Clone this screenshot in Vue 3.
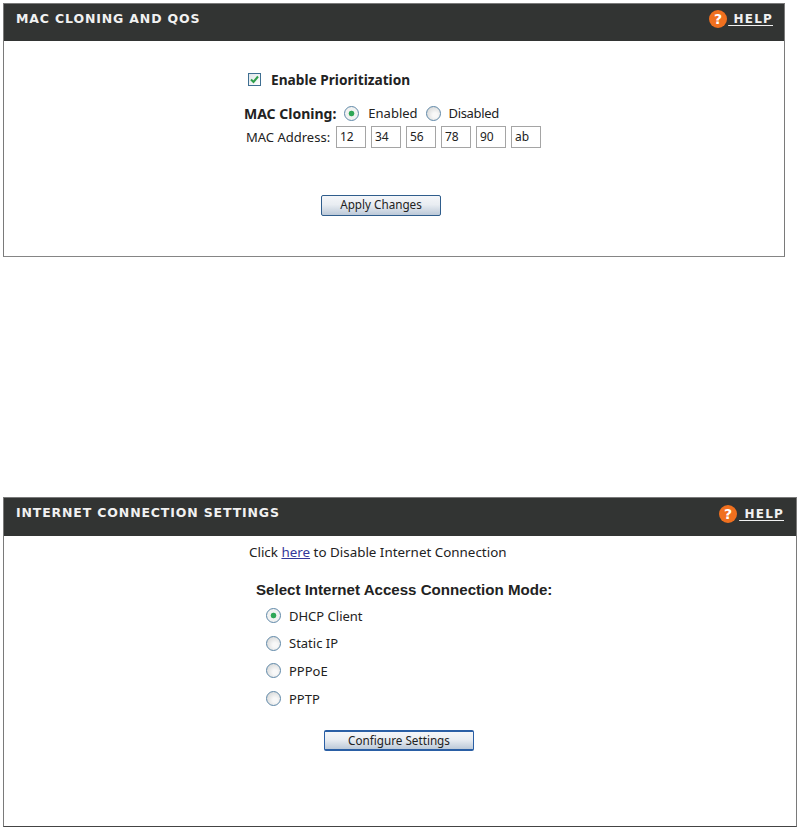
<script setup>
const macParts = ['12', '34', '56', '78', '90', 'ab']
const modes = [
  { label: 'DHCP Client', on: true },
  { label: 'Static IP', on: false },
  { label: 'PPPoE', on: false },
  { label: 'PPTP', on: false },
]
</script>

<template>
  <div class="page">
    <section class="panel panel-mac">
      <header class="bar">
        <h2>MAC CLONING AND QOS</h2>
        <a class="help">
          <span class="qmark">?</span><span class="help-text"> HELP</span>
        </a>
      </header>
      <div class="mac-body">
        <div class="prio">
          <span class="check">
            <svg width="11" height="11" viewBox="0 0 11 11"><path d="M2 5.5 L4.5 8 L9 2.5" fill="none" stroke="#2e9e4a" stroke-width="2"/></svg>
          </span>
          <b>Enable Prioritization</b>
        </div>
        <div class="clone">
          <b>MAC Cloning:</b>
          <span class="radio on"></span><span class="opt-a">Enabled</span>
          <span class="radio"></span><span class="opt-b">Disabled</span>
        </div>
        <div class="addr">
          <span class="addr-label">MAC Address:</span>
          <span v-for="p in macParts" :key="p" class="field">{{ p }}</span>
        </div>
        <button class="btn btn-apply">Apply Changes</button>
      </div>
    </section>

    <section class="panel panel-net">
      <header class="bar">
        <h2>INTERNET CONNECTION SETTINGS</h2>
        <a class="help">
          <span class="qmark">?</span><span class="help-text"> HELP</span>
        </a>
      </header>
      <div class="net-body">
        <p class="click">Click <a class="link">here</a> to Disable Internet Connection</p>
        <h3>Select Internet Access Connection Mode:</h3>
        <ul class="modes">
          <li v-for="m in modes" :key="m.label">
            <span class="radio" :class="{ on: m.on }"></span>{{ m.label }}
          </li>
        </ul>
        <button class="btn btn-config">Configure Settings</button>
      </div>
    </section>
  </div>
</template>

<style scoped>
.page {
  width: 800px;
  height: 833px;
  box-sizing: border-box;
  padding-top: 3px;
  padding-left: 3px;
  background: #fff;
  font-family: "Noto Sans", "DejaVu Sans", sans-serif;
  font-size: 13px;
  color: #222;
  overflow: hidden;
}
.panel {
  box-sizing: border-box;
  border: 1px solid #7a7a7a;
  background: #fff;
}
.panel-mac { width: 782px; height: 254px; border-bottom-color: #858585; }
.panel-net { width: 794px; height: 330px; margin-top: 240px; border-bottom-color: #444; }
.bar {
  height: 37px;
  background: #323433;
  display: flex;
  align-items: flex-start;
  justify-content: space-between;
  color: #f1f1f1;
}
.panel-net .bar { height: 38px; }
.bar h2 {
  margin: 7px 0 0 12px;
  font-family: "DejaVu Sans", sans-serif;
  font-size: 12.5px;
  line-height: 16px;
  font-weight: 700;
  letter-spacing: 0.85px;
}
.help {
  display: flex;
  align-items: center;
  margin: 6px 11px 0 0;
  font-family: "DejaVu Sans", sans-serif;
  font-weight: 700;
  font-size: 12px;
  letter-spacing: 1.2px;
  line-height: 16px;
}
.panel-net .help { margin-right: 12px; margin-top: 7px; }
.panel-net .qmark { margin-right: 2px; }
.qmark {
  width: 18px;
  height: 18px;
  margin-right: 1px;
  border-radius: 50%;
  background: #f0701f;
  color: #fff;
  text-align: center;
  font-size: 14px;
  line-height: 18px;
  letter-spacing: 0;
}
.help-text {
  white-space: pre;
  text-decoration: underline;
  text-underline-offset: 2px;
}
.mac-body {
  display: flex;
  flex-direction: column;
  align-items: flex-start;
}
.prio {
  display: flex;
  align-items: center;
  margin: 28px 0 0 244px;
  height: 20px;
  font-size: 13.7px;
}
.check {
  width: 13px;
  height: 13px;
  box-sizing: border-box;
  border: 1px solid #3f6f92;
  background: linear-gradient(135deg, #dfe5e8, #fff);
  margin-right: 10px;
  display: flex;
  align-items: center;
  justify-content: center;
}
.clone {
  display: flex;
  align-items: center;
  margin: 15px 0 0 240px;
  height: 18px;
}
.clone b { font-size: 14px; margin-right: 8px; }
.clone .radio { margin-right: 9px; }
.opt-a { margin-right: 8px; }
.opt-b { letter-spacing: -0.35px; margin-left: -1px; }
.radio {
  display: inline-block;
  flex: none;
  width: 15px;
  height: 15px;
  box-sizing: border-box;
  border-radius: 50%;
  border: 1.5px solid #5f88a8;
  background: radial-gradient(circle at 62% 62%, #f8f8f8 20%, #d2d4d4 90%);
  margin-right: 8px;
}
.radio.on {
  background: radial-gradient(circle, #2fa756 0 2.5px, #f1f2f1 3.2px);
}
.addr {
  display: flex;
  align-items: center;
  margin: 4px 0 0 242px;
  height: 22px;
}
.addr-label { width: 90px; flex: none; }
.field {
  box-sizing: border-box;
  width: 30px;
  height: 22px;
  margin-right: 5px;
  border: 1px solid #a5a5a5;
  padding-left: 3px;
  font-size: 12px;
  line-height: 20px;
}
.btn {
  display: block;
  box-sizing: border-box;
  border: 1px solid #2f5d8c;
  border-radius: 2px;
  background: linear-gradient(#f4f6f9 0%, #e9edf2 45%, #bcc9d8 100%);
  font-family: inherit;
  font-size: 11.7px;
  line-height: 17px;
  color: #222;
  padding: 0 0 2px;
}
.btn-apply {
  width: 120px;
  height: 21px;
  margin: 47px 0 0 317px;
}
.net-body {
  display: flex;
  flex-direction: column;
  align-items: flex-start;
}
.click {
  margin: 7px 0 0 245px;
  line-height: 18px;
  font-size: 13.4px;
}
.link { color: #33379a; text-decoration: underline; }
h3 {
  margin: 20px 0 0 252px;
  font-family: "Liberation Sans", sans-serif;
  font-size: 15.1px;
  line-height: 18px;
  font-weight: 700;
  color: #222;
}
.modes {
  list-style: none;
  margin: 3px 0 0 262px;
  padding: 0;
}
.modes li {
  display: flex;
  align-items: center;
  height: 27.6px;
}
.modes .radio { margin-right: 8px; }
.btn-config {
  width: 150px;
  height: 21px;
  margin: 18px 0 0 320px;
  border-color: #2a5fa5;
  border-width: 2px 1px;
}
</style>

<style>
html, body { margin: 0; background: #fff; }
</style>
